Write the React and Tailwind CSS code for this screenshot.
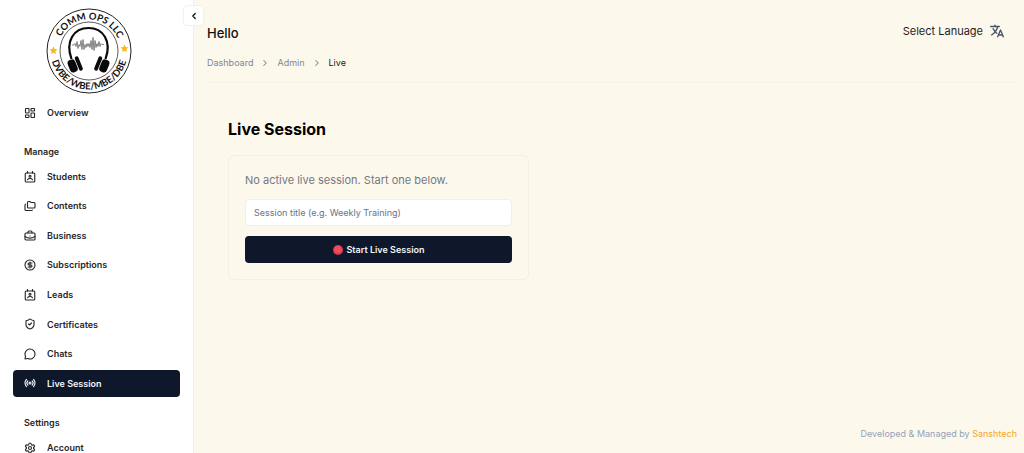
import React, { useState } from "react";
import {
  LayoutDashboard,
  Folders,
  BriefcaseBusiness,
  CircleDollarSign,
  ShieldCheck,
  MessageCircle,
  Radio,
  Settings,
  ChevronLeft,
  ChevronRight,
} from "lucide-react";
import { IoLanguage } from "react-icons/io5";

const ContactIcon = ({ className }) => (
  <svg
    viewBox="0 0 24 24"
    className={className}
    fill="none"
    stroke="currentColor"
    strokeWidth="2.250"
    strokeLinecap="round"
    strokeLinejoin="round"
    aria-hidden="true"
  >
    <rect x="2.500" y="4" width="19" height="18" rx="2" />
    <path d="M7 1v3M17 1v3M7 17.500c2-3.200 8-3.200 10 0" />
    <circle cx="12" cy="10.500" r="2" />
  </svg>
);

const manageLinks = [
  { name: "Students", icon: ContactIcon },
  { name: "Contents", icon: Folders },
  { name: "Business", icon: BriefcaseBusiness },
  { name: "Subscriptions", icon: CircleDollarSign },
  { name: "Leads", icon: ContactIcon },
  { name: "Certificates", icon: ShieldCheck },
  { name: "Chats", icon: MessageCircle },
  { name: "Live Session", icon: Radio, active: true },
];

const Logo = () => (
  <svg viewBox="0 0 86 86" className="h-[86px] w-[86px]" role="img" aria-label="Comm Ops LLC">
    <defs>
      <path id="logoTop" d="M11.5 43 A31.5 31.5 0 0 1 74.5 43" />
      <path id="logoBottom" d="M4.5 43 A38.5 38.5 0 0 0 81.5 43" />
    </defs>
    <circle cx="43" cy="43" r="42" fill="#fff" stroke="#222" strokeWidth="1" />
    <circle cx="43" cy="43" r="29" fill="none" stroke="#333" strokeWidth="0.8" />
    <g fill="#111" fontFamily="Lato, sans-serif" fontWeight="700" fontSize="9.5" textAnchor="middle">
      <text><textPath href="#logoTop" startOffset="51%">COMM OPS LLC</textPath></text>
      <text><textPath href="#logoBottom" startOffset="50%">DVBE/WBE/MBE/DBE</textPath></text>
    </g>
    <g fill="#f5b921">
      <path d="M7.5 38.500 l1.2 2.6 2.8 .3 -2.1 1.9 .6 2.8 -2.5 -1.4 -2.5 1.4 .6 -2.8 -2.1 -1.9 2.8 -.3z" />
      <path d="M78.5 36.500 l1.2 2.6 2.8 .3 -2.1 1.9 .6 2.8 -2.5 -1.4 -2.5 1.4 .6 -2.8 -2.1 -1.9 2.8 -.3z" />
    </g>
    <path d="M25.500 51 C19 33 28 20 42.500 20 S66 33 59.500 51" fill="none" stroke="#0a0a0a" strokeWidth="2.200" />
    <g fill="#0a0a0a">
      <g transform="rotate(-22 29 57)">
        <rect x="22.500" y="50.500" width="8" height="13" rx="3.500" />
        <rect x="31.200" y="49.500" width="3.800" height="15" rx="1.800" />
      </g>
      <g transform="rotate(22 56 57)">
        <rect x="54.500" y="50.500" width="8" height="13" rx="3.500" />
        <rect x="50" y="49.500" width="3.800" height="15" rx="1.800" />
      </g>
    </g>
    <path
      d="M26 37h2l1-1.500 1 3 1-5 1 7 1-4 1 2 1-6 1 9 1-10 1 10 1-5 1 3 1-4 1 3 1-3 1 4 1-7 1 9 1-12 1 13 1-10 1 7 1-4 1 3 1-5 1 5 1-3 1 1h2"
      fill="none"
      stroke="#555"
      strokeWidth="0.7"
    />
  </svg>
);

const NavItem = ({ name, icon: Icon, active }) => (
  <a
    href="#"
    aria-current={active ? "page" : undefined}
    className={`flex h-[27px] shrink-0 items-center gap-[11px] rounded px-[11px] font-semibold ${
      active ? "bg-[#0f172a] text-[#f1f5f9]" : "text-[#27272a]"
    }`}
  >
    <Icon className="h-3 w-3" strokeWidth={2.25} />
    {name}
  </a>
);

const Sidebar = () => (
  <aside className="w-[194px] shrink-0 overflow-hidden border-r border-[#f3efe6] bg-white px-[13px] pt-2 text-[9px]">
    <div className="pl-[33px]">
      <Logo />
    </div>
    <nav className="pt-[5px]">
      <NavItem name="Overview" icon={LayoutDashboard} />
      <h2 className="mt-[18px] mb-1 px-[11px] leading-[15px] font-semibold text-[#27272a]">Manage</h2>
      <div className="flex h-[234px] flex-col justify-between">
        {manageLinks.map((link) => (
          <NavItem key={link.name} {...link} />
        ))}
      </div>
      <h2 className="mt-[18px] px-[11px] leading-[15px] font-semibold text-[#27272a]">Settings</h2>
      <div className="pt-1">
        <NavItem name="Account" icon={Settings} />
      </div>
    </nav>
  </aside>
);

const Header = () => (
  <header className="flex items-start justify-between border-b border-[#f4f1ea] pt-[23px] pb-[11px]">
    <div>
      <p className="text-[13px] leading-5 font-medium text-[#111]">Hello</p>
      <nav aria-label="Breadcrumb" className="mt-3 flex items-center gap-[7px] text-[9px] leading-4 text-[#7d8796]">
        <a href="#">Dashboard</a>
        <ChevronRight className="h-[10px] w-[10px]" strokeWidth={2.5} />
        <a href="#">Admin</a>
        <ChevronRight className="h-[10px] w-[10px]" strokeWidth={2.5} />
        <span className="text-[#111827]">Live</span>
      </nav>
    </div>
    <button type="button" className="mr-3 flex items-center gap-[6px] text-[11px] leading-4 text-[#1c1c1f]">
      Select Lanuage
      <IoLanguage className="h-4 w-4 text-[#475569]" />
    </button>
  </header>
);

const LiveSession = () => {
  const [title, setTitle] = useState("");

  const handleSubmit = (e) => {
    e.preventDefault();
  };

  return (
    <section className="px-[21px] pt-[34px]">
      <h1 className="text-[16px] leading-6 font-bold text-black">Live Session</h1>
      <form
        onSubmit={handleSubmit}
        className="mt-[14px] flex w-full max-w-[301px] flex-col gap-[10px] rounded-md border border-[#f2efe9] p-4"
      >
        <p className="text-[11px] leading-[17px] text-[#737984]">No active live session. Start one below.</p>
        <input
          type="text"
          name="title"
          aria-label="Session title"
          value={title}
          onChange={(e) => setTitle(e.target.value)}
          placeholder="Session title (e.g. Weekly Training)"
          className="h-[27px] w-full rounded border border-[#eceff3] bg-white px-2 text-[9px] text-[#111827] placeholder:text-[#64748b]"
        />
        <button
          type="submit"
          className="flex h-[27px] items-center justify-center gap-1 rounded bg-[#0f172a] text-[9px] font-semibold text-[#f1f5f9]"
        >
          <svg viewBox="0 0 10 10" className="h-[10px] w-[10px]" aria-hidden="true">
            <circle cx="5" cy="5" r="5" fill="#dd3a4e" />
            <circle cx="5" cy="4.500" r="3.500" fill="#ee4d60" />
          </svg>
          Start Live Session
        </button>
      </form>
    </section>
  );
};

const App = () => {
  return (
    <div className="flex h-screen overflow-hidden bg-[#fdf8ec] font-['Inter',sans-serif]">
      <Sidebar />
      <div className="relative flex min-w-0 flex-1 flex-col pr-[7px] pl-[13px]">
        <button
          type="button"
          aria-label="Collapse sidebar"
          className="absolute top-[5px] -left-[11px] flex h-[21px] w-[21px] items-center justify-center rounded border border-[#f1f1f1] bg-white text-[#111]"
        >
          <ChevronLeft className="h-[10px] w-[10px]" strokeWidth={3} />
        </button>
        <Header />
        <main className="flex-1">
          <LiveSession />
        </main>
        <footer className="pb-[11px] text-right text-[9px] leading-4 text-[#94a3b8]">
          Developed &amp; Managed by{" "}
          <a href="#" className="text-[#f5a524]">
            Sanshtech
          </a>
        </footer>
      </div>
    </div>
  );
};

export default App;
